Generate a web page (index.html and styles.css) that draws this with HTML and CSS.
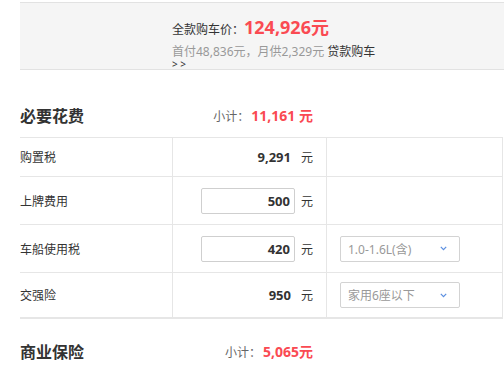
FILE: index.html
```html
<!DOCTYPE html>
<html lang="zh-CN">
<head>
<meta charset="utf-8">
<title>购车费用</title>
<link rel="stylesheet" href="styles.css">
</head>
<body>
<div class="page">
  <div class="summary">
    <div class="summary-text">
      <div class="total"><span class="total-label">全款购车价：</span><span class="price">124,926元</span></div>
      <div class="loan">首付48,836元，月供2,329元 <a class="loan-link" href="#">贷款购车 <span class="arrows">&gt; &gt;</span></a></div>
    </div>
  </div>

  <section class="group">
    <div class="group-head">
      <h2 class="group-title">必要花费</h2>
      <div class="subtotal">小计：<strong>11,161 元</strong></div>
    </div>
    <div class="fees">
      <div class="row row-1">
        <div class="cell name">购置税</div>
        <div class="cell value"><span class="amount">9,291</span><span class="unit">元</span></div>
        <div class="cell option"></div>
      </div>
      <div class="row row-2">
        <div class="cell name">上牌费用</div>
        <div class="cell value"><input class="amount-input" type="text" value="500"><span class="unit">元</span></div>
        <div class="cell option"></div>
      </div>
      <div class="row row-3">
        <div class="cell name">车船使用税</div>
        <div class="cell value"><input class="amount-input" type="text" value="420"><span class="unit">元</span></div>
        <div class="cell option">
          <div class="select"><span>1.0-1.6L(含)</span><svg class="chevron" width="7" height="5" viewBox="0 0 7 5"><polyline points="0.8,0.8 3.5,3.6 6.2,0.8" fill="none" stroke="#5b8fe0" stroke-width="1.2"/></svg></div>
        </div>
      </div>
      <div class="row row-4">
        <div class="cell name">交强险</div>
        <div class="cell value"><span class="amount">950</span><span class="unit">元</span></div>
        <div class="cell option">
          <div class="select"><span>家用6座以下</span><svg class="chevron" width="7" height="5" viewBox="0 0 7 5"><polyline points="0.8,0.8 3.5,3.6 6.2,0.8" fill="none" stroke="#5b8fe0" stroke-width="1.2"/></svg></div>
        </div>
      </div>
    </div>
  </section>

  <section class="group">
    <div class="group-head">
      <h2 class="group-title">商业保险</h2>
      <div class="subtotal">小计：<strong>5,065元</strong></div>
    </div>
  </section>
</div>
</body>
</html>
```

FILE: styles.css
```css
* { box-sizing: border-box; }

body {
  margin: 0;
  background: #fff;
  color: #333;
  font-family: "Noto Sans", "Noto Sans CJK SC", sans-serif;
  font-size: 12px;
  overflow: hidden;
}

.page {
  padding: 2px 0 0 20px;
}

.summary {
  height: 68px;
  background: #f5f5f5;
  border-top: 1px solid #e2e2e2;
  border-bottom: 1px solid #e2e2e2;
  padding-left: 152px;
  overflow: hidden;
  margin-bottom: 13px;
}

.summary-text {
  width: 212px;
}

.total {
  padding-top: 12px;
  height: 36px;
  line-height: 24px;
  font-size: 12px;
  color: #333;
}

.price {
  font-size: 18px;
  font-weight: bold;
  color: #fa4a52;
}

.loan {
  margin-top: 7px;
  line-height: 12px;
  color: #999;
  font-size: 12px;
}

.loan-link {
  color: #333;
  text-decoration: none;
}

.arrows {
  font-size: 10px;
}

.group {
  padding-top: 10px;
}

.group-head {
  display: flex;
  align-items: center;
  height: 44px;
}

.group-title {
  margin: 0;
  width: 152px;
  font-size: 16px;
  font-weight: bold;
  color: #333;
}

.subtotal {
  width: 141px;
  text-align: right;
  color: #666;
  font-size: 12px;
}

.subtotal strong {
  margin-left: 2px;
  font-size: 14px;
  color: #fa4a52;
}

.fees {
  width: 483px;
  border-top: 1px solid #e6e6e6;
  border-bottom: 2px solid #e6e6e6;
  border-right: 1px solid #e6e6e6;
}

.row {
  display: grid;
  grid-template-columns: 152px 154px 1fr;
  border-bottom: 1px solid #e6e6e6;
}

.row-1 { height: 39px; }
.row-2 { height: 48px; }
.row-3 { height: 48px; }
.row-4 { height: 44px; border-bottom: 0; }

.cell {
  display: flex;
  align-items: center;
}

.name {
  color: #333;
}

.value {
  border-left: 1px solid #e6e6e6;
  justify-content: flex-end;
  padding-right: 13px;
}

.option {
  border-left: 1px solid #e6e6e6;
  padding-left: 13px;
}

.amount,
.amount-input {
  width: 94px;
  font-family: inherit;
  font-size: 13px;
  font-weight: bold;
  color: #333;
  text-align: right;
  padding: 0 4px;
}

.amount {
  display: inline-block;
}

.amount-input {
  height: 26px;
  border: 1px solid #cfcfcf;
  border-radius: 2px;
  background: #fff;
  margin: 0;
  outline: none;
}

.unit {
  width: 12px;
  margin-left: 6px;
  color: #333;
}

.select {
  width: 120px;
  height: 26px;
  border: 1px solid #d3d3d3;
  border-radius: 2px;
  display: flex;
  align-items: center;
  justify-content: space-between;
  padding: 0 12px 0 7px;
  color: #999;
  background: #fff;
}

.chevron {
  display: block;
}
```
